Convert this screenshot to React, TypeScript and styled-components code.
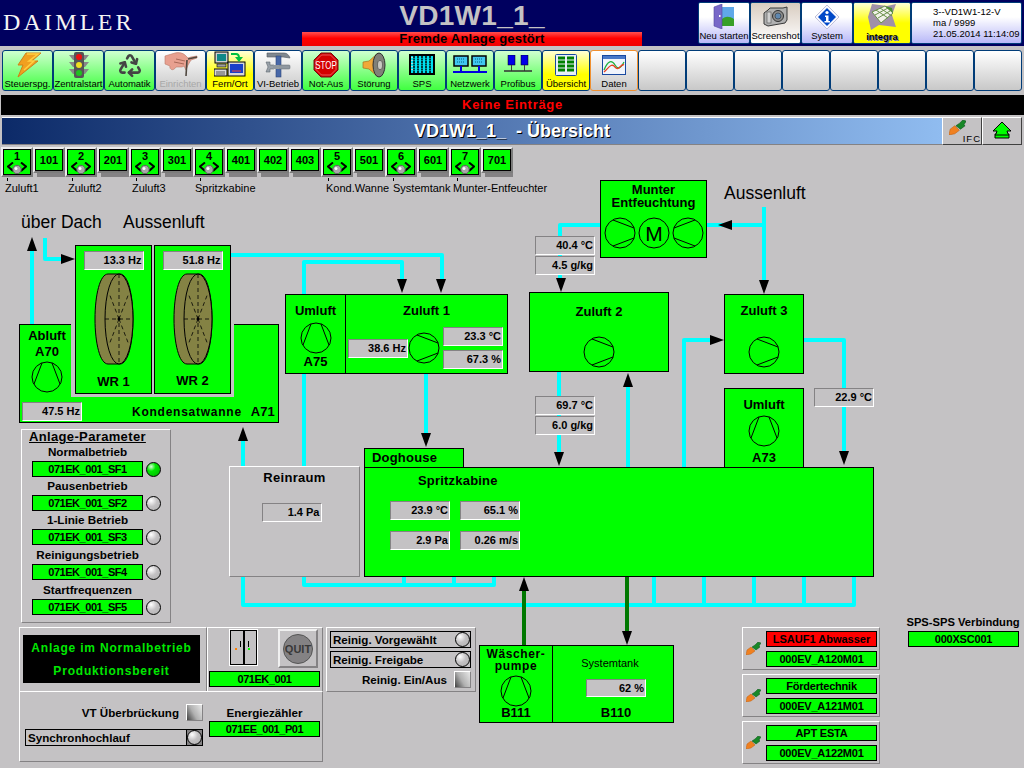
import React from 'react'
import styled, { createGlobalStyle, css } from 'styled-components'
import { Recycle } from 'lucide-react'

const ORIGIN = 178
const GREY = '#c4c2c4'
const SHADE = '#848284'
const LIME = '#00ff00'

const GlobalStyle = createGlobalStyle`
  * { box-sizing: border-box; }
  html, body { margin: 0; padding: 0; height: 768px; overflow: hidden; background: ${GREY}; }
  body { font-family: "Liberation Sans", Arial, sans-serif; color: #000; }
`

interface PlaceProps {
  $x: number
  $y: number
  $w?: number
  $h?: number
}

const place = css<PlaceProps>`
  position: absolute;
  left: ${p => p.$x}px;
  top: ${p => p.$y - ORIGIN}px;
  ${p => (p.$w ? `width: ${p.$w}px;` : '')}
  ${p => (p.$h ? `height: ${p.$h}px;` : '')}
`

/* ---------- header ---------- */

const Header = styled.header`
  display: flex;
  height: 46px;
  background: #00005f;
`

const Logo = styled.div`
  width: 302px;
  padding: 9px 0 0 3px;
  font-family: 'Liberation Serif', serif;
  font-size: 24px;
  line-height: 26px;
  letter-spacing: 3.2px;
  color: #f4f4f4;
`

const Headline = styled.div`
  width: 340px;
  position: relative;
`

const PlantName = styled.div`
  height: 32px;
  text-align: center;
  font-size: 28px;
  font-weight: bold;
  line-height: 31px;
  letter-spacing: 0.3px;
  color: ${GREY};
  white-space: nowrap;
`

const FaultBar = styled.div`
  position: relative;
  height: 14px;
  background: linear-gradient(#ff5050, #ff0000 45%, #f00000);
  text-align: center;
  font-size: 13px;
  font-weight: bold;
  line-height: 14px;
  letter-spacing: 0.2px;
  color: #000;
`

const HeaderTools = styled.div`
  display: flex;
  margin: 2px 2px 0 auto;
  height: 42px;
`

const ToolButton = styled.div<{ $w: number; $kind?: 'warm' | 'yellow' }>`
  width: ${p => p.$w}px;
  display: flex;
  flex-direction: column;
  align-items: center;
  border: 1px solid #003c78;
  border-radius: 2px;
  font-size: 9.5px;
  white-space: nowrap;
  background: ${p =>
    p.$kind === 'warm'
      ? 'linear-gradient(#d8ccc0, #ffffff)'
      : p.$kind === 'yellow'
        ? 'linear-gradient(#ffffd8, #ffff00 50%)'
        : 'linear-gradient(#ffffff 35%, #b8b8f8)'};
`

const ToolIcon = styled.div`
  height: 27px;
  display: flex;
  align-items: center;
  justify-content: center;
`

const IntegraText = styled.span`
  font-weight: bold;
  font-size: 9.5px;
  margin-top: 1px;
  text-shadow: 1px 1px 0 #6c6cc0;
`

const InfoCell = styled.div`
  width: 111px;
  padding: 3px 0 0 21px;
  border: 1px solid #003c78;
  border-radius: 2px;
  background: linear-gradient(#ffffff 35%, #b8b8f8);
  font-size: 9.5px;
  line-height: 11px;
`

/* ---------- toolbar ---------- */

const Toolbar = styled.nav`
  display: flex;
  margin-top: 4px;
  padding-left: 2px;
  height: 41px;
`

const toolTones = {
  green: 'linear-gradient(#d0ffd0, #40ff40)',
  yellow: 'linear-gradient(#ffffd8, #ffff00 60%)',
  white: 'linear-gradient(#ffffff, #c8c8c8)'
}

const ToolbarButton = styled.div<{ $w?: number; $tone: keyof typeof toolTones; $orange?: boolean; $muted?: boolean }>`
  width: ${p => p.$w ?? 48}px;
  height: 41px;
  display: flex;
  flex-direction: column;
  align-items: center;
  border: 1px solid ${p => (p.$orange ? '#f09030' : '#003c78')};
  border-radius: 3px;
  background: ${p => toolTones[p.$tone]};
  font-size: 9.5px;
  line-height: 12px;
  color: ${p => (p.$muted ? '#a8a8a8' : '#000')};
  white-space: nowrap;
`

const ToolbarIcon = styled.div`
  height: 27px;
  display: flex;
  align-items: center;
  justify-content: center;
`

const MessageBar = styled.div`
  margin: 4px 0 0 1px;
  height: 20px;
  background: #000;
  text-align: center;
  color: #ff0000;
  font-size: 13px;
  font-weight: bold;
  line-height: 20px;
  letter-spacing: 0.7px;
`

const TitleRow = styled.div`
  display: flex;
  margin: 2px 2px 0 2px;
  height: 28px;
`

const TitleBar = styled.div`
  flex: 1;
  border-top: 1px solid #fff;
  border-bottom: 1px solid ${SHADE};
  background: linear-gradient(90deg, #0c2a68, #5074ae 50%, #90bcf0);
  text-align: center;
  font-size: 18px;
  font-weight: bold;
  line-height: 27px;
  padding-left: 80px;
  white-space: pre;
  color: #fff;
  text-shadow: 1px 1px 0 #000;
`

const SquareButton = styled.div`
  width: 40px;
  position: relative;
  display: flex;
  align-items: center;
  justify-content: center;
  background: ${GREY};
  border: 1px solid;
  border-color: #fff #404040 #404040 #fff;
`

const IfcPlug = styled.div`
  margin: -7px 9px 0 0;
`

const IfcText = styled.span`
  position: absolute;
  right: 0;
  bottom: 1px;
  font-size: 9.5px;
  letter-spacing: 1px;
  line-height: 9px;
`

/* ---------- station row ---------- */

const StationRow = styled.div`
  display: flex;
  align-items: flex-start;
  margin-top: 2px;
  padding-left: 1px;
  height: 31px;
`

const stationFrame = css`
  width: 32px;
  flex: none;
  background: ${LIME};
  border: 2px solid;
  border-color: #ececec #7c7c7c #7c7c7c #ececec;
  box-shadow: inset 0 0 0 1px #000;
  display: flex;
  flex-direction: column;
  align-items: center;
  font-size: 11px;
  font-weight: bold;
`

const StationBig = styled.div`
  ${stationFrame}
  height: 30px;
  padding-top: 2px;
  line-height: 11px;
`

const StationSmall = styled.div`
  ${stationFrame}
  position: relative;
  height: 26px;
  line-height: 22px;
  &::after {
    content: '';
    position: absolute;
    left: 2px;
    right: -2px;
    top: calc(100% + 2px);
    height: 4px;
    background: ${SHADE};
  }
`

const StationCaption = styled.div<PlaceProps>`
  ${place}
  font-size: 11px;
  line-height: 14px;
  white-space: nowrap;
`

/* ---------- diagram ---------- */

const Diagram = styled.main`
  position: relative;
  width: 1024px;
  height: 590px;
  margin-top: 0;
`

const PipeLayer = styled.svg`
  position: absolute;
  left: 0;
  top: 0;
`

const Heading = styled.div<PlaceProps>`
  ${place}
  font-size: 17.5px;
  line-height: 20px;
  white-space: nowrap;
`

const Reading = styled.div`
  width: 60px;
  height: 19px;
  background: ${GREY};
  border: 1px solid;
  border-color: ${SHADE} #fff #fff ${SHADE};
  text-align: right;
  padding-right: 1px;
  font-size: 11px;
  font-weight: bold;
  line-height: 17px;
  white-space: nowrap;
`

const PlacedReading = styled(Reading)<PlaceProps>`
  ${place}
`

const Unit = styled.div<PlaceProps>`
  ${place}
  display: flex;
  flex-direction: column;
  align-items: center;
  background: ${LIME};
  border: 1px solid #000;
`

const UnitText = styled.div<{ $mt?: number }>`
  margin-top: ${p => p.$mt ?? 0}px;
  font-size: 13px;
  font-weight: bold;
  line-height: 16px;
  white-space: nowrap;
`

const FanSlot = styled.div<{ $mt?: number }>`
  margin-top: ${p => p.$mt ?? 0}px;
  height: 32px;
`

const Tray = styled.div<PlaceProps>`
  ${place}
  background: ${LIME};
  border: 1px solid #000;
  padding-left: 2px;
`

const TrayNotch = styled.div`
  position: absolute;
  left: 51px;
  top: -1px;
  width: 163px;
  height: 73px;
  background: ${GREY};
`

const TrayColumn = styled.div`
  width: 50px;
  padding-top: 3px;
  display: flex;
  flex-direction: column;
  align-items: center;
`

const TrayFooter = styled.div`
  display: flex;
  align-items: center;
  margin-top: 9px;
  font-size: 12px;
  font-weight: bold;
  white-space: nowrap;
`

const TrayLabel = styled.span`
  margin-left: 50px;
  letter-spacing: 0.75px;
`

const TrayCode = styled.span`
  margin-left: 9px;
  font-size: 13px;
`

const WheelBox = styled(Unit)`
  padding-top: 5px;
`

const WheelSlot = styled.div`
  margin-top: 3px;
`

const SplitUnit = styled.div<PlaceProps>`
  ${place}
  display: flex;
  background: ${LIME};
  border: 1px solid #000;
`

const SplitLeft = styled.div<{ $w: number; $pt?: number }>`
  width: ${p => p.$w}px;
  padding-top: ${p => p.$pt ?? 0}px;
  display: flex;
  flex-direction: column;
  align-items: center;
  border-right: 1px solid #000;
`

const SplitRight = styled.div<{ $pt?: number }>`
  flex: 1;
  padding-top: ${p => p.$pt ?? 0}px;
  display: flex;
  flex-direction: column;
  align-items: center;
`

const SupplyRow = styled.div`
  display: flex;
  align-items: center;
  margin-top: 8px;
  width: 100%;
  padding-left: 2px;
`

const ReadingStack = styled.div`
  display: flex;
  flex-direction: column;
  gap: 4px;
  margin-left: 3px;
`

const FanCluster = styled.div`
  display: flex;
  gap: 2px;
  margin-top: 8px;
`

const UnitTitleTight = styled(UnitText)`
  line-height: 13px;
`

const PumpTitle = styled(UnitText)`
  font-size: 12px;
  line-height: 12px;
  letter-spacing: 0.6px;
`

const CabinTab = styled.div<PlaceProps>`
  ${place}
  background: ${LIME};
  border: 1px solid #000;
  border-bottom: none;
  padding-left: 7px;
  font-size: 13px;
  font-weight: bold;
  line-height: 18px;
  letter-spacing: 0.2px;
`

const Cabin = styled.div<PlaceProps>`
  ${place}
  background: ${LIME};
  border: 1px solid #000;
`

const CabinTitle = styled.div`
  margin: 5px 0 0 53px;
  font-size: 13px;
  font-weight: bold;
  line-height: 16px;
  letter-spacing: 0.2px;
`

const CabinReadings = styled.div`
  display: grid;
  grid-template-columns: 60px 60px;
  gap: 11px 10px;
  margin: 12px 0 0 25px;
`

const CleanRoom = styled.div<PlaceProps>`
  ${place}
  display: flex;
  flex-direction: column;
  align-items: center;
  padding-top: 3px;
  background: ${GREY};
  border: 1px solid;
  border-color: #fff ${SHADE} ${SHADE} #fff;
  font-size: 13px;
  font-weight: bold;
  line-height: 16px;
  letter-spacing: 0.3px;
`

const CleanReading = styled(Reading)`
  margin: 17px 0 0 -6px;
  letter-spacing: 0;
`

const TankLabel = styled.div`
  margin: 10px 6px 0 0;
  font-size: 11px;
  line-height: 14px;
`

const TankReading = styled(Reading)`
  margin: 9px 0 0 6px;
  height: 18px;
  line-height: 16px;
`

const TankCode = styled(UnitText)`
  margin: 8px 0 0 6px;
`

/* ---------- panels ---------- */

const Panel = styled.section<PlaceProps>`
  ${place}
  background: ${GREY};
  border: 1px solid;
  border-color: #fff ${SHADE} ${SHADE} #fff;
`

const Tag = styled.div<{ $alarm?: boolean; $tight?: boolean }>`
  width: 111px;
  height: 16px;
  flex: none;
  background: ${p => (p.$alarm ? '#ff0000' : LIME)};
  border: 1px solid #000;
  text-align: center;
  font-size: 11px;
  font-weight: bold;
  line-height: 14px;
  letter-spacing: ${p => (p.$alarm ? '0' : p.$tight ? '-0.45px' : '-0.2px')};
  white-space: nowrap;
`

const PlacedTag = styled(Tag)<PlaceProps>`
  ${place}
`

const ParameterTitle = styled.div`
  padding-left: 7px;
  font-size: 13px;
  font-weight: bold;
  line-height: 13px;
  text-decoration: underline;
  letter-spacing: 0.35px;
`

const ParameterLabel = styled.div<{ $tall?: boolean }>`
  padding-left: 10px;
  width: 121px;
  text-align: center;
  font-size: 11.7px;
  font-weight: bold;
  line-height: ${p => (p.$tall ? 19 : 18)}px;
  white-space: nowrap;
`

const ParameterRow = styled.div`
  display: flex;
  align-items: center;
  padding-left: 10px;
  gap: 3px;
  height: 16px;
`

const Led = styled.span<{ $on?: boolean }>`
  display: block;
  flex: none;
  width: 15px;
  height: 15px;
  border-radius: 50%;
  border: 1px solid #000;
  background: ${p =>
    p.$on
      ? 'radial-gradient(circle at 32% 28%, #d8ffd8 0, #00e800 35%, #00b000 100%)'
      : `radial-gradient(circle at 32% 28%, #ffffff 0, ${GREY} 45%, #b0b0b0 100%)`};
`

const StatusBoard = styled.div`
  margin: 7px 0 0 3px;
  width: 177px;
  height: 48px;
  background: #000;
  color: #00e800;
  display: flex;
  flex-direction: column;
  align-items: center;
  justify-content: space-between;
  padding: 5px 0 4px;
  font-size: 12px;
  font-weight: bold;
  line-height: 16px;
  letter-spacing: 0.8px;
`

const DoorPanel = styled(Panel)`
  padding-left: 21px;
  display: flex;
  flex-direction: column;
`

const DoorRow = styled.div`
  display: flex;
  justify-content: space-between;
  align-items: flex-start;
  padding: 1px 4px 0 0;
  height: 43px;
`

const QuitButton = styled.div`
  width: 40px;
  height: 39px;
  display: flex;
  align-items: center;
  justify-content: center;
  border: 2px solid;
  border-color: #f0f0f0 ${SHADE} ${SHADE} #f0f0f0;
`

const QuitDisc = styled.div`
  width: 30px;
  height: 30px;
  border-radius: 50%;
  background: #848284;
  border: 1px solid #555;
  text-align: center;
  font-size: 11px;
  font-weight: bold;
  line-height: 28px;
  color: #383838;
  white-space: nowrap;
`

const DoorTag = styled(Tag)`
  margin-left: -20px;
`

const BypassPanel = styled(Panel)`
  display: flex;
  padding: 12px 0 0 5px;
`

const BypassColumn = styled.div`
  width: 178px;
  display: flex;
  flex-direction: column;
  gap: 8px;
`

const SwitchLine = styled.div<{ $w?: number }>`
  ${p => (p.$w ? `width: ${p.$w}px;` : '')}
  display: flex;
  align-items: center;
  justify-content: flex-end;
  gap: 7px;
  height: 17px;
  font-size: 11.6px;
  font-weight: bold;
  white-space: nowrap;
`

const PushButton = styled.span`
  display: block;
  width: 17px;
  height: 17px;
  flex: none;
  border: 1px solid;
  border-color: #fff ${SHADE} ${SHADE} #fff;
  background: linear-gradient(60deg, #404040, #b0b0b0 45%, #e8e8e8);
`

const LedBar = styled.div<{ $w?: number }>`
  width: ${p => p.$w ?? 178}px;
  height: 17px;
  display: flex;
  align-items: center;
  justify-content: space-between;
  border: 1px solid #000;
  padding-left: 2px;
  font-size: 11.6px;
  font-weight: bold;
  white-space: nowrap;
`

const LedCell = styled.span<{ $dark?: boolean }>`
  width: 16px;
  height: 15px;
  display: flex;
  align-items: center;
  justify-content: center;
  border-left: 1px solid ${p => (p.$dark ? '#000' : 'transparent')};
  background: ${p => (p.$dark ? SHADE : 'transparent')};
`

const EnergyColumn = styled.div`
  margin-left: 6px;
  display: flex;
  flex-direction: column;
  font-size: 11.6px;
  font-weight: bold;
  line-height: 17px;
  align-items: center;
`

const CleaningPanel = styled(Panel)`
  padding: 3px 0 0 3px;
  display: flex;
  flex-direction: column;
  gap: 3px;
`

const PanelStack = styled.div<PlaceProps>`
  ${place}
  display: flex;
  flex-direction: column;
  gap: 4px;
`

const EventPanel = styled.section`
  height: 43px;
  display: flex;
  align-items: center;
  background: ${GREY};
  border: 1px solid;
  border-color: #fff ${SHADE} ${SHADE} #fff;
  padding-left: 3px;
`

const EventTags = styled.div`
  margin-left: 5px;
  display: flex;
  flex-direction: column;
  gap: 4px;
`

const LinkCaption = styled.div<PlaceProps>`
  ${place}
  font-size: 11.2px;
  font-weight: bold;
  line-height: 14px;
  text-align: center;
  white-space: nowrap;
`

/* ---------- drawings ---------- */

type Dir = 'up' | 'right' | 'left'

const Fan = ({ dir }: { dir: Dir }) => {
  const rotate = dir === 'up' ? -90 : dir === 'left' ? 180 : 0
  return (
    <svg width="32" height="32" viewBox="-16 -16 32 32" style={{ display: 'block' }}>
      <g transform={`rotate(${rotate})`} fill="none" stroke="#000" strokeWidth="1">
        <circle r="15" />
        <path d="M-7 -13 L14 -5 M-7 13 L14 5" />
      </g>
    </svg>
  )
}

const Wheel = () => (
  <svg width="40" height="92" viewBox="0 0 40 92" style={{ display: 'block' }}>
    <path
      d="M14 1 H26 C34 1 39 22 39 46 C39 70 34 91 26 91 H14 C6 91 1 70 1 46 C1 22 6 1 14 1 Z"
      fill="#848244"
      stroke="#000"
    />
    <ellipse cx="25" cy="46" rx="14" ry="45" fill="#848244" stroke="#000" />
    <path
      d="M25 1 V91 M11 46 H39 M25 46 L15 20 M25 46 L35 20 M25 46 L15 72 M25 46 L35 72"
      stroke="#000"
      strokeDasharray="4 3"
      fill="none"
      strokeWidth="0.8"
    />
    <circle cx="25" cy="46" r="1.5" fill="#000" />
  </svg>
)

const MotorIcon = () => (
  <svg width="32" height="32" viewBox="-16 -16 32 32" style={{ display: 'block' }}>
    <circle r="15" fill="none" stroke="#000" />
    <text y="7.5" textAnchor="middle" fontSize="21" fontFamily="Liberation Sans">
      M
    </text>
  </svg>
)

const Valve = () => (
  <svg width="20" height="12" viewBox="0 0 20 12" style={{ display: 'block' }}>
    <path d="M6 0.5 L1 4.5 L6 9 M14 0.5 L19 4.5 L14 9" fill="none" stroke="#000" strokeWidth="2" />
    <path d="M3 7 Q10 10 17 7" stroke="#000" fill="none" />
    <circle cx="10" cy="7.5" r="4.2" fill="#a8a8a8" stroke="#606060" />
    <circle cx="9" cy="6.5" r="1.5" fill="#fff" />
  </svg>
)

const Plug = ({ scale = 1 }: { scale?: number }) => (
  <svg width={15 * scale} height={13 * scale} viewBox="0 0 15 13" style={{ display: 'block' }}>
    <path d="M0 13 L1 8 L5 5 L9 9 L5 12 Z" fill="#f08020" stroke="#c06010" strokeWidth="0.5" />
    <path d="M6 5 L9 3 L12 0 L15 1 L13 4 L14 5 L10 8 Z" fill="#188828" stroke="#0c5018" strokeWidth="0.5" />
  </svg>
)

const UpArrowIcon = () => (
  <svg width="20" height="20" viewBox="0 0 20 20">
    <path d="M10 1 L19 10 H15 L16 13 H17 V17 H3 V13 H4 L5 10 H1 Z" fill={LIME} stroke="#000" />
    <path d="M3 14 H17" stroke="#000" />
  </svg>
)

const Door = () => (
  <svg width="29" height="37" viewBox="0 0 29 37" style={{ display: 'block' }}>
    <rect x="0.5" y="0.5" width="28" height="36" fill="#000" stroke="#fff" />
    <rect x="2" y="2" width="12" height="33" fill={GREY} />
    <rect x="16" y="2" width="11" height="33" fill={GREY} />
    <path d="M11.5 12 V18 M19.5 12 V18" stroke="#000" />
    <rect x="6" y="19" width="2" height="2" fill="#ff8000" />
    <rect x="19" y="19" width="2" height="2" fill={LIME} />
  </svg>
)

const BoltIcon = () => (
  <svg width="28" height="26" viewBox="0 0 28 26">
    <path d="M12 1 H27 L18 9 L24 9 L4 25 L9 13 L4 13 Z" fill="#f0a020" stroke="#d08018" />
    <path d="M13 2 H24 L15 9 L20 9 L10 18" fill="none" stroke="#ffd040" strokeWidth="1.5" />
  </svg>
)

const TrafficIcon = () => (
  <svg width="22" height="26" viewBox="0 0 22 26">
    <path d="M1 3 H21 L17 8 H5 Z M1 10 H21 L17 15 H5 Z M1 17 H21 L17 22 H5 Z" fill="#888" />
    <rect x="6" y="0" width="10" height="26" rx="2" fill="#555" />
    <circle cx="11" cy="5" r="3" fill="#ee1010" />
    <circle cx="11" cy="13" r="3" fill="#f0e020" />
    <circle cx="11" cy="21" r="3" fill="#20c020" />
  </svg>
)

const HandIcon = () => (
  <svg width="34" height="26" viewBox="0 0 34 26">
    <path
      d="M1 4 L11 1 C15 0 19 1 21 3 L24 6 L27 5 L33 4 L33 6 L27 8 L24 13 L22 18 L20 14 L18 15 L12 15 C9 20 5 17 6 14 L1 12 Z"
      fill="#e8a090"
      stroke="#b87868"
      strokeWidth="0.6"
    />
    <path d="M12 7 L21 9 M10 10 L20 12" stroke="#a86858" fill="none" />
    <path d="M23 8 L22 24 M24 7 L33 5" stroke="#504840" strokeWidth="1.6" fill="none" />
  </svg>
)

const RemoteIcon = () => (
  <svg width="32" height="27" viewBox="0 0 32 27">
    <rect x="1" y="1" width="13" height="11" fill="#d0d0d0" stroke="#000" />
    <rect x="3" y="3" width="9" height="7" fill="#108888" />
    <rect x="3" y="13" width="9" height="3" fill="#a0a0a0" stroke="#000" strokeWidth="0.6" />
    <rect x="0" y="18" width="13" height="7" fill="#d8d8d8" stroke="#000" />
    <path d="M2 21 H11 M2 23 H11" stroke="#000" strokeWidth="0.6" />
    <rect x="14" y="11" width="17" height="14" fill="#d8d8d8" stroke="#000" />
    <rect x="16" y="13" width="13" height="9" fill="#1840c8" />
    <path d="M18 20 H27" stroke="#f04040" />
    <path d="M17 3 H22 C25 3 25 5 25 7" fill="none" stroke="#00c040" strokeWidth="2" />
    <path d="M21 6 H29 L25 11 Z" fill="#00c040" />
  </svg>
)

const ToolsIcon = () => (
  <svg width="26" height="27" viewBox="0 0 26 27">
    <path d="M2 2 H19 C22 2 24 4 25 7 L18 6 H2 Z" fill="#808890" stroke="#505860" strokeWidth="0.6" />
    <rect x="11" y="5" width="5" height="21" fill="#4868a8" stroke="#304878" strokeWidth="0.6" />
    <rect x="13" y="14" width="12" height="4" rx="1" fill="#9098a0" stroke="#606870" strokeWidth="0.5" />
    <path d="M1 11 L5 11 L5 14 L9 14 L9 18 L5 18 L5 21 L1 21 L3 16 Z" fill="#98a0a8" stroke="#606870" strokeWidth="0.6" />
    <rect x="8" y="14" width="6" height="4" fill="#9098a0" />
  </svg>
)

const StopIcon = () => (
  <svg width="26" height="26" viewBox="0 0 26 26">
    <path d="M8 1 H18 L25 8 V18 L18 25 H8 L1 18 V8 Z" fill="#d40000" stroke="#701010" />
    <path d="M8.5 3 H17.5 L23 8.5 V17.5 L17.5 23 H8.5 L3 17.5 V8.5 Z" fill="none" stroke="#ffb0b0" strokeWidth="0.5" />
    <text transform="translate(13 17) scale(0.72 1)" textAnchor="middle" fontSize="11" fill="#fff" fontFamily="Liberation Sans">
      STOP
    </text>
  </svg>
)

const SpeakerIcon = () => (
  <svg width="24" height="26" viewBox="0 0 24 26">
    <path d="M1 10 L7 9 L16 1 V25 L7 17 L1 16 Z" fill="#f0a838" stroke="#a87020" strokeWidth="0.7" />
    <ellipse cx="17" cy="13" rx="6" ry="12" fill="#808078" stroke="#303030" />
    <ellipse cx="18" cy="13" rx="2.5" ry="4.5" fill="#c8c8c0" stroke="#404040" strokeWidth="0.6" />
  </svg>
)

const PlcIcon = () => (
  <svg width="26" height="21" viewBox="0 0 26 21">
    <rect x="1" y="1" width="24" height="19" fill="#00e0f0" stroke="#000" strokeWidth="2" />
    <path d="M5 2 V20 M9 2 V20 M13 2 V20 M17 2 V20 M21 2 V20" stroke="#000" strokeWidth="1.5" strokeDasharray="2 0.5" />
    <path d="M3 3 V18" stroke="#e0e0e0" strokeWidth="1.5" strokeDasharray="1 2" />
  </svg>
)

const NetworkIcon = () => (
  <svg width="34" height="20" viewBox="0 0 34 20">
    <rect x="1" y="1" width="14" height="10" fill="#40c8f0" stroke="#000" strokeWidth="1.5" />
    <rect x="19" y="1" width="14" height="10" fill="#40c8f0" stroke="#000" strokeWidth="1.5" />
    <path d="M4 4 H12 M4 7 H12 M22 4 H30 M22 7 H30" stroke="#006080" strokeDasharray="1 1" />
    <path d="M8 11 V16 M26 11 V16" stroke="#0000e0" strokeWidth="2" />
    <path d="M0 17 H34" stroke="#0000e0" strokeWidth="2" />
  </svg>
)

const BusIcon = () => (
  <svg width="30" height="20" viewBox="0 0 30 20">
    <rect x="5" y="0" width="7" height="10" fill="#0000e8" stroke="#000" strokeWidth="0.5" />
    <rect x="18" y="0" width="7" height="10" fill="#0000e8" stroke="#000" strokeWidth="0.5" />
    <path d="M8.5 10 V16 M21.5 10 V16" stroke="#404040" />
    <path d="M1 16 H29" stroke="#303030" strokeWidth="1.5" />
  </svg>
)

const OverviewIcon = () => (
  <svg width="22" height="22" viewBox="0 0 22 22">
    <rect x="0.5" y="0.5" width="21" height="21" rx="1" fill="#e8f0f8" stroke="#1848a0" />
    {[3, 7, 11, 15].map(y => (
      <path key={y} d={`M3 ${y + 1} H10 M12 ${y + 1} H19`} stroke="#008000" strokeWidth="3" />
    ))}
  </svg>
)

const ChartIcon = () => (
  <svg width="24" height="20" viewBox="0 0 24 20">
    <rect x="0.5" y="0.5" width="23" height="19" fill="#f0f4fc" stroke="#1848a0" />
    <rect x="1" y="1" width="22" height="3" fill="#4878c8" />
    <path d="M2 15 C6 5 10 5 13 10 S19 13 22 7" fill="none" stroke="#20b040" strokeWidth="1.3" />
    <path d="M2 17 C6 14 9 7 13 12 S19 8 22 10" fill="none" stroke="#e84020" strokeWidth="1.3" />
  </svg>
)

const DoorToolIcon = () => (
  <svg width="22" height="25" viewBox="0 0 22 25">
    <rect x="8" y="3" width="13" height="19" fill="#60a8e8" />
    <path d="M8 16 C12 12 16 12 21 15 V22 H8 Z" fill="#38a028" />
    <path d="M1 3 L9 0 V25 L1 22 Z" fill="#7868c8" stroke="#5048a0" strokeWidth="0.6" />
    <rect x="6" y="11" width="1.5" height="2" fill="#fff" />
  </svg>
)

const CameraIcon = () => (
  <svg width="25" height="21" viewBox="0 0 25 21">
    <path d="M1 7 L5 4 L7 2 H20 L24 1 V14 L22 17 L5 20 L1 18 Z" fill="#b0b0b0" stroke="#383838" />
    <circle cx="15" cy="10" r="5.5" fill="#8c8c8c" stroke="#303030" />
    <circle cx="15" cy="10" r="3" fill="#6088b0" stroke="#303030" strokeWidth="0.6" />
    <rect x="4" y="6" width="4" height="11" fill="#d0d0d0" stroke="#505050" strokeWidth="0.6" />
  </svg>
)

const InfoIcon = () => (
  <svg width="24" height="24" viewBox="0 0 24 24">
    <path d="M12 0 L24 12 L12 24 L0 12 Z" fill="#f8f8ff" stroke="#c0c0d8" />
    <path d="M12 3 L21 12 L12 21 L3 12 Z" fill="#0048c8" />
    <circle cx="12" cy="7.5" r="1.6" fill="#fff" />
    <path d="M10 10.5 H13.5 V16 H15 V17.5 H9.5 V16 H11 V12 H10 Z" fill="#fff" />
  </svg>
)

const IntegraIcon = () => (
  <svg width="30" height="27" viewBox="0 0 30 27">
    <path d="M5 1 L20 3 L29 1 L25 12 L29 24 L12 22 L4 27 L1 14 Z" fill="#a090a8" />
    <path d="M5 9 L18 3 L26 10 L14 20 Z" fill="#f0f0e8" stroke="#689048" />
    <path d="M9 7 L21 15 M13 5 L25 13 M8 12 L21 5 M11 15 L23 8" stroke="#689048" />
    <path d="M18 3 L26 10 L25 5 Z" fill="#489030" />
  </svg>
)

const Pipe = styled.path<{ $dark?: boolean }>`
  fill: none;
  stroke: ${p => (p.$dark ? '#007800' : '#00ffff')};
  stroke-width: 4;
  stroke-linejoin: round;
`

const arrowPoints: Record<string, (x: number, y: number) => string> = {
  up: (x, y) => `${x},${y} ${x + 5},${y + 14} ${x - 5},${y + 14}`,
  down: (x, y) => `${x},${y} ${x + 5},${y - 14} ${x - 5},${y - 14}`,
  right: (x, y) => `${x},${y} ${x - 14},${y + 5} ${x - 14},${y - 5}`,
  left: (x, y) => `${x},${y} ${x + 14},${y + 5} ${x + 14},${y - 5}`
}

const pipes = [
  'M32 324 V250',
  'M45 238 V259 H62',
  'M231 255 H442 V280',
  'M304 294 V262 H402 V280',
  'M304 374 V466',
  'M426 374 V436',
  'M560 283 V225 H600',
  'M707 225 H764 M764 207 V286',
  'M559 372 V454',
  'M628 467 V386',
  'M684 467 V340 H711',
  'M804 340 H844 V453',
  'M304 577 V585 H494 V577 M404 577 V585 M454 577 V585',
  'M243 466 V440',
  'M243 577 V605 H854 V577 M654 577 V605 M704 577 V605 M754 577 V605 M804 577 V605'
]

const arrows: [string, number, number][] = [
  ['up', 32, 237],
  ['right', 75, 259],
  ['down', 402, 293],
  ['down', 441, 293],
  ['down', 426, 447],
  ['down', 561, 292],
  ['left', 718, 225],
  ['down', 764, 294],
  ['down', 559, 466],
  ['up', 628, 373],
  ['right', 724, 340],
  ['down', 844, 465],
  ['up', 243, 427],
  ['up', 524, 577],
  ['down', 627, 645]
]

const Pipes = () => (
  <PipeLayer width="1024" height="590" viewBox={`0 ${ORIGIN} 1024 590`}>
    {pipes.map(d => (
      <Pipe key={d} d={d} />
    ))}
    <Pipe $dark d="M524 645 V590" />
    <Pipe $dark d="M627 577 V632" />
    {arrows.map(([dir, x, y]) => (
      <polygon key={`${x}-${y}`} points={arrowPoints[dir](x, y)} fill="#000" />
    ))}
    {[7, 72, 136, 200, 328, 393, 457].map(x => (
      <path key={x} d={`M${x + 0.5} 178 V181`} stroke="#000" />
    ))}
  </PipeLayer>
)

const stationRow: (number | string)[] = [1, '101', 2, '201', 3, '301', 4, '401', '402', '403', 5, '501', 6, '601', 7, '701']

const toolbar: { label: string; icon?: React.ReactNode; tone: keyof typeof toolTones; w?: number; orange?: boolean; muted?: boolean }[] = [
  { label: 'Steuerspg.', icon: <BoltIcon />, tone: 'green', w: 51 },
  { label: 'Zentralstart', icon: <TrafficIcon />, tone: 'green', w: 51 },
  { label: 'Automatik', icon: <Recycle size={26} color="#444" strokeWidth={2.4} />, tone: 'green', w: 51 },
  { label: 'Einrichten', icon: <HandIcon />, tone: 'white', w: 51, muted: true },
  { label: 'Fern/Ort', icon: <RemoteIcon />, tone: 'yellow' },
  { label: 'VI-Betrieb', icon: <ToolsIcon />, tone: 'white' },
  { label: 'Not-Aus', icon: <StopIcon />, tone: 'green' },
  { label: 'Störung', icon: <SpeakerIcon />, tone: 'green' },
  { label: 'SPS', icon: <PlcIcon />, tone: 'green' },
  { label: 'Netzwerk', icon: <NetworkIcon />, tone: 'green' },
  { label: 'Profibus', icon: <BusIcon />, tone: 'green' },
  { label: 'Übersicht', icon: <OverviewIcon />, tone: 'yellow' },
  { label: 'Daten', icon: <ChartIcon />, tone: 'white', orange: true }
]

const parameters = [
  { label: 'Normalbetrieb', tag: '071EK_001_SF1', on: true },
  { label: 'Pausenbetrieb', tag: '071EK_001_SF2' },
  { label: '1-Linie Betrieb', tag: '071EK_001_SF3' },
  { label: 'Reinigungsbetrieb', tag: '071EK_001_SF4', tall: true },
  { label: 'Startfrequenzen', tag: '071EK_001_SF5', tall: true }
]

const stationCaptions: [string, number][] = [
  ['Zuluft1', 5],
  ['Zuluft2', 68],
  ['Zuluft3', 132],
  ['Spritzkabine', 195],
  ['Kond.Wanne', 326],
  ['Systemtank', 393],
  ['Munter-Entfeuchter', 453]
]

const events = [
  { top: 'LSAUF1 Abwasser', bottom: '000EV_A120M01', alarm: true },
  { top: 'Fördertechnik', bottom: '000EV_A121M01' },
  { top: 'APT ESTA', bottom: '000EV_A122M01' }
]

const App: React.FC = () => (
  <React.Fragment>
    <GlobalStyle />
    <Header>
      <Logo>DAIMLER</Logo>
      <Headline>
        <PlantName>VD1W1_1_</PlantName>
        <FaultBar>Fremde Anlage gestört</FaultBar>
      </Headline>
      <HeaderTools>
        <ToolButton $w={52}>
          <ToolIcon><DoorToolIcon /></ToolIcon>
          Neu starten
        </ToolButton>
        <ToolButton $w={51} $kind="warm">
          <ToolIcon><CameraIcon /></ToolIcon>
          Screenshot
        </ToolButton>
        <ToolButton $w={52}>
          <ToolIcon><InfoIcon /></ToolIcon>
          System
        </ToolButton>
        <ToolButton $w={58} $kind="yellow">
          <ToolIcon><IntegraIcon /></ToolIcon>
          <IntegraText>integra</IntegraText>
        </ToolButton>
        <InfoCell>
          3--VD1W1-12-V
          <br />
          ma / 9999
          <br />
          21.05.2014 11:14:09
        </InfoCell>
      </HeaderTools>
    </Header>

    <Toolbar>
      {toolbar.map(b => (
        <ToolbarButton key={b.label} $w={b.w} $tone={b.tone} $orange={b.orange} $muted={b.muted}>
          <ToolbarIcon>{b.icon}</ToolbarIcon>
          {b.label}
        </ToolbarButton>
      ))}
      {Array.from({ length: 8 }).map((_, i) => (
        <ToolbarButton key={i} $tone="white" />
      ))}
    </Toolbar>

    <MessageBar>Keine Einträge</MessageBar>

    <TitleRow>
      <TitleBar>VD1W1_1_  - Übersicht</TitleBar>
      <SquareButton>
        <IfcPlug><Plug scale={1.15} /></IfcPlug>
        <IfcText>IFC</IfcText>
      </SquareButton>
      <SquareButton>
        <UpArrowIcon />
      </SquareButton>
    </TitleRow>

    <StationRow>
      {stationRow.map(s =>
        typeof s === 'number' ? (
          <StationBig key={s}>
            {s}
            <Valve />
          </StationBig>
        ) : (
          <StationSmall key={s}>{s}</StationSmall>
        )
      )}
    </StationRow>

    <Diagram>
      <Pipes />

      {stationCaptions.map(([label, x]) => (
        <StationCaption key={label} $x={x} $y={181}>
          {label}
        </StationCaption>
      ))}

      <Heading $x={21} $y={212}>über Dach</Heading>
      <Heading $x={123} $y={212}>Aussenluft</Heading>
      <Heading $x={724} $y={183}>Aussenluft</Heading>

      <Tray $x={19} $y={324} $w={260} $h={99}>
        <TrayNotch />
        <TrayColumn>
          <UnitText>Abluft</UnitText>
          <UnitText>A70</UnitText>
          <FanSlot $mt={1}><Fan dir="up" /></FanSlot>
        </TrayColumn>
        <TrayFooter>
          <Reading>47.5 Hz</Reading>
          <TrayLabel>Kondensatwanne</TrayLabel>
          <TrayCode>A71</TrayCode>
        </TrayFooter>
      </Tray>

      <WheelBox $x={75} $y={245} $w={77} $h={149}>
        <Reading>13.3 Hz</Reading>
        <WheelSlot><Wheel /></WheelSlot>
        <UnitText $mt={9}>WR 1</UnitText>
      </WheelBox>
      <WheelBox $x={154} $y={245} $w={77} $h={149}>
        <Reading>51.8 Hz</Reading>
        <WheelSlot><Wheel /></WheelSlot>
        <UnitText $mt={8}>WR 2</UnitText>
      </WheelBox>

      <SplitUnit $x={285} $y={294} $w={223} $h={80}>
        <SplitLeft $w={60} $pt={8}>
          <UnitText>Umluft</UnitText>
          <FanSlot $mt={3}><Fan dir="up" /></FanSlot>
          <UnitText>A75</UnitText>
        </SplitLeft>
        <SplitRight $pt={8}>
          <UnitText>Zuluft 1</UnitText>
          <SupplyRow>
            <Reading>38.6 Hz</Reading>
            <Fan dir="right" />
            <ReadingStack>
              <Reading>23.3 °C</Reading>
              <Reading>67.3 %</Reading>
            </ReadingStack>
          </SupplyRow>
        </SplitRight>
      </SplitUnit>

      <Unit $x={600} $y={180} $w={107} $h={78}>
        <UnitTitleTight $mt={2}>Munter</UnitTitleTight>
        <UnitTitleTight>Entfeuchtung</UnitTitleTight>
        <FanCluster>
          <Fan dir="right" />
          <MotorIcon />
          <Fan dir="left" />
        </FanCluster>
      </Unit>

      <PlacedReading $x={535} $y={236}>40.4 °C</PlacedReading>
      <PlacedReading $x={535} $y={256}>4.5 g/kg</PlacedReading>

      <Unit $x={529} $y={292} $w={140} $h={80}>
        <UnitText $mt={11}>Zuluft 2</UnitText>
        <FanSlot $mt={16}><Fan dir="right" /></FanSlot>
      </Unit>

      <PlacedReading $x={535} $y={396}>69.7 °C</PlacedReading>
      <PlacedReading $x={535} $y={416}>6.0 g/kg</PlacedReading>

      <Unit $x={724} $y={294} $w={80} $h={80}>
        <UnitText $mt={8}>Zuluft 3</UnitText>
        <FanSlot $mt={17}><Fan dir="right" /></FanSlot>
      </Unit>

      <PlacedReading $x={814} $y={388}>22.9 °C</PlacedReading>

      <Unit $x={724} $y={388} $w={80} $h={80}>
        <UnitText $mt={8}>Umluft</UnitText>
        <FanSlot $mt={2}><Fan dir="up" /></FanSlot>
        <UnitText $mt={3}>A73</UnitText>
      </Unit>

      <CabinTab $x={364} $y={448} $w={100} $h={20}>Doghouse</CabinTab>
      <Cabin $x={364} $y={467} $w={510} $h={110}>
        <CabinTitle>Spritzkabine</CabinTitle>
        <CabinReadings>
          <Reading>23.9 °C</Reading>
          <Reading>65.1 %</Reading>
          <Reading>2.9 Pa</Reading>
          <Reading>0.26 m/s</Reading>
        </CabinReadings>
      </Cabin>

      <CleanRoom $x={229} $y={466} $w={131} $h={111}>
        Reinraum
        <CleanReading>1.4 Pa</CleanReading>
      </CleanRoom>

      <SplitUnit $x={479} $y={645} $w={195} $h={78}>
        <SplitLeft $w={73} $pt={2}>
          <PumpTitle>Wäscher-</PumpTitle>
          <PumpTitle>pumpe</PumpTitle>
          <FanSlot $mt={3}><Fan dir="up" /></FanSlot>
          <UnitText $mt={-2}>B111</UnitText>
        </SplitLeft>
        <SplitRight>
          <TankLabel>Systemtank</TankLabel>
          <TankReading>62 %</TankReading>
          <TankCode>B110</TankCode>
        </SplitRight>
      </SplitUnit>

      <Panel $x={21} $y={429} $w={150} $h={194}>
        <ParameterTitle>Anlage-Parameter</ParameterTitle>
        {parameters.map(p => (
          <React.Fragment key={p.tag}>
            <ParameterLabel $tall={p.tall}>{p.label}</ParameterLabel>
            <ParameterRow>
              <Tag $tight>{p.tag}</Tag>
              <Led $on={p.on} />
            </ParameterRow>
          </React.Fragment>
        ))}
      </Panel>

      <Panel $x={19} $y={627} $w={188} $h={65}>
        <StatusBoard>
          <span>Anlage im Normalbetrieb</span>
          <span>Produktionsbereit</span>
        </StatusBoard>
      </Panel>

      <DoorPanel $x={207} $y={627} $w={116} $h={65}>
        <DoorRow>
          <Door />
          <QuitButton>
            <QuitDisc>QUIT</QuitDisc>
          </QuitButton>
        </DoorRow>
        <DoorTag $tight>071EK_001</DoorTag>
      </DoorPanel>

      <BypassPanel $x={19} $y={691} $w={304} $h={71}>
        <BypassColumn>
          <SwitchLine>
            VT Überbrückung
            <PushButton />
          </SwitchLine>
          <LedBar>
            Synchronhochlauf
            <LedCell $dark><Led /></LedCell>
          </LedBar>
        </BypassColumn>
        <EnergyColumn>
          Energiezähler
          <Tag $tight>071EE_001_P01</Tag>
        </EnergyColumn>
      </BypassPanel>

      <CleaningPanel $x={326} $y={627} $w={150} $h={65}>
        <LedBar $w={141}>
          Reinig. Vorgewählt
          <LedCell><Led /></LedCell>
        </LedBar>
        <LedBar $w={141}>
          Reinig. Freigabe
          <LedCell><Led /></LedCell>
        </LedBar>
        <SwitchLine $w={141}>
          Reinig. Ein/Aus
          <PushButton />
        </SwitchLine>
      </CleaningPanel>

      <PanelStack $x={742} $y={627} $w={138}>
        {events.map(e => (
          <EventPanel key={e.bottom}>
            <Plug />
            <EventTags>
              <Tag $alarm={e.alarm}>{e.top}</Tag>
              <Tag>{e.bottom}</Tag>
            </EventTags>
          </EventPanel>
        ))}
      </PanelStack>

      <LinkCaption $x={906} $y={615} $w={114}>SPS-SPS Verbindung</LinkCaption>
      <PlacedTag $x={908} $y={631}>000XSC001</PlacedTag>
    </Diagram>
  </React.Fragment>
)

export default App
